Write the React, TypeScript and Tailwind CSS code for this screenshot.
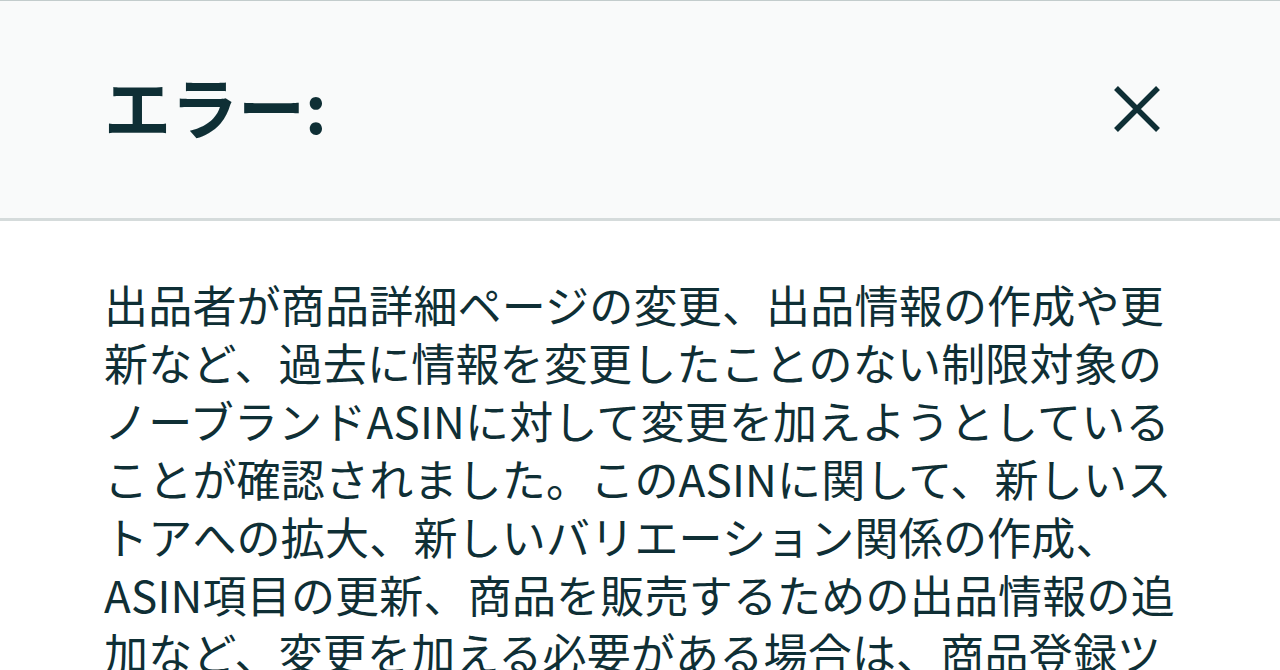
export default function App() {
  const body =
    "出品者が商品詳細ページの変更、出品情報の作成や更新など、過去に情報を変更したことのない制限対象のノーブランドASINに対して変更を加えようとしていることが確認されました。このASINに関して、新しいストアへの拡大、新しいバリエーション関係の作成、ASIN項目の更新、商品を販売するための出品情報の追加など、変更を加える必要がある場合は、商品登録ツールから申請してください。";
  return (
    <div
      className="w-[1280px] h-[670px] overflow-hidden bg-white text-[#0f2f35]"
      style={{ fontFamily: '"Noto Sans CJK JP", "Noto Sans", sans-serif' }}
    >
      <div className="h-[221px] bg-[#f9fafa] border-t border-t-[#c3cccc] border-b-[3px] border-b-[#d5dbdb] flex items-center justify-between pl-[104px] pr-[118px]">
        <h1 className="text-[67px] font-bold leading-none mb-[10px]">エラー:</h1>
        <button className="w-[50px] h-[50px] flex items-center justify-center mb-[2px]">
          <svg width="50" height="50" viewBox="0 0 50 50" fill="none">
            <path d="M4 4 L46 46 M46 4 L4 46" stroke="#0f2f35" strokeWidth="5.5" strokeLinecap="butt" />
          </svg>
        </button>
      </div>
      <div className="px-[104px] pt-[54px]">
        <p className="text-[44px] leading-[58px] tracking-[0.2px]">{body}</p>
      </div>
    </div>
  );
}
